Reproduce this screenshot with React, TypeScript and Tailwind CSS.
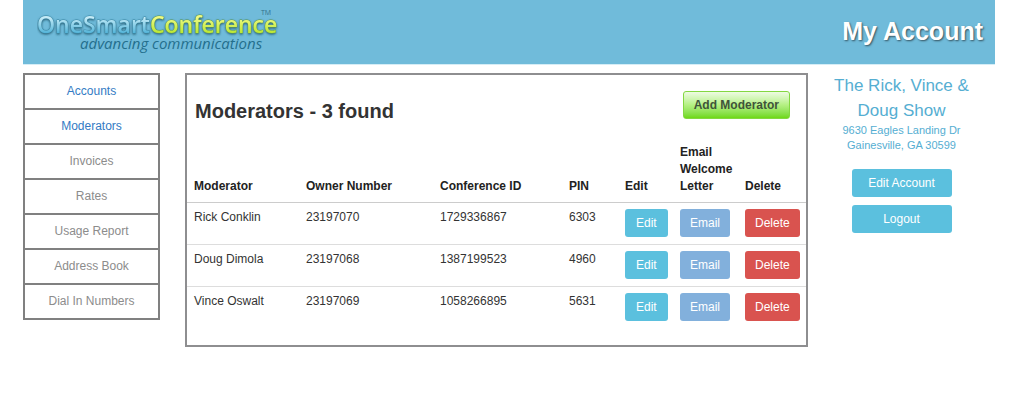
interface Moderator {
  name: string;
  owner: string;
  conference: string;
  pin: string;
}

const navItems = [
  { label: 'Accounts', active: true },
  { label: 'Moderators', active: true },
  { label: 'Invoices', active: false },
  { label: 'Rates', active: false },
  { label: 'Usage Report', active: false },
  { label: 'Address Book', active: false },
  { label: 'Dial In Numbers', active: false },
];

const moderators: Moderator[] = [
  { name: 'Rick Conklin', owner: '23197070', conference: '1729336867', pin: '6303' },
  { name: 'Doug Dimola', owner: '23197068', conference: '1387199523', pin: '4960' },
  { name: 'Vince Oswalt', owner: '23197069', conference: '1058266895', pin: '5631' },
];

function Logo() {
  return (
    <svg width="250" height="56" viewBox="0 0 250 56" role="img" aria-label="OneSmartConference">
      <defs>
        <linearGradient id="logo-blue" x1="0" y1="0" x2="0" y2="1">
          <stop offset="0.3" stopColor="#c4ebf7" />
          <stop offset="0.8" stopColor="#4fb2d8" />
        </linearGradient>
        <linearGradient id="logo-green" x1="0" y1="0" x2="0" y2="1">
          <stop offset="0.3" stopColor="#effa84" />
          <stop offset="0.8" stopColor="#b8e62e" />
        </linearGradient>
        <filter id="logo-shadow" x="-5%" y="-10%" width="110%" height="130%">
          <feDropShadow dx="0" dy="1" stdDeviation="0.8" floodColor="#1c5268" floodOpacity="0.9" />
        </filter>
      </defs>
      <g
        className="font-['Open_Sans',sans-serif] text-[23px] font-semibold"
        filter="url(#logo-shadow)"
        strokeWidth="0.8"
        paintOrder="stroke"
        strokeLinejoin="round"
      >
        <text x="0" y="29">
          <tspan fill="url(#logo-blue)" stroke="#3b8aa8">OneSmart</tspan>
          <tspan fill="url(#logo-green)" stroke="#5c9a4c">Conference</tspan>
        </text>
      </g>
      <text x="224" y="11" fill="#33718a" className="font-['Open_Sans',sans-serif] text-[7px]">TM</text>
      <text x="43" y="45" fill="#246f8d" className="font-['Open_Sans',sans-serif] text-[15px] italic">
        advancing communications
      </text>
    </svg>
  );
}

function Header() {
  return (
    <header className="flex h-[65px] items-center justify-between border-b border-[#d5edf6] bg-[#70bbda] pr-3 pl-3.5">
      <a href="#home" className="block">
        <Logo />
      </a>
      <h1 className="text-[25px] font-bold text-white [text-shadow:1px_1px_2px_#33515e]">My Account</h1>
    </header>
  );
}

function SideNav() {
  return (
    <nav className="col-span-2 pr-[25px]">
      <ul className="divide-y-2 divide-[#808080] border-2 border-[#808080] text-center text-[12px]">
        {navItems.map((item) => (
          <li key={item.label}>
            <a
              href="#nav"
              className={item.active ? 'block py-2 leading-[17px] text-[#337bc4]' : 'block py-2 leading-[17px] text-[#8c8c8c]'}
            >
              {item.label}
            </a>
          </li>
        ))}
      </ul>
    </nav>
  );
}

function ModeratorTable() {
  return (
    <table className="w-full table-fixed text-left text-[12px] leading-[17px] text-[#333]">
      <colgroup>
        <col className="w-[112px]" />
        <col className="w-[134px]" />
        <col className="w-[129px]" />
        <col className="w-[56px]" />
        <col className="w-[55px]" />
        <col className="w-[65px]" />
        <col className="w-[68px]" />
      </colgroup>
      <thead>
        <tr className="border-b border-[#ccc] align-bottom text-[#222]">
          <th className="px-[7px] pb-[7px]">Moderator</th>
          <th className="px-[7px] pb-[7px]">Owner Number</th>
          <th className="px-[7px] pb-[7px]">Conference ID</th>
          <th className="px-[7px] pb-[7px]">PIN</th>
          <th className="px-[7px] pb-[7px]">Edit</th>
          <th className="px-[7px] pb-[7px]">Email Welcome Letter</th>
          <th className="px-[7px] pb-[7px]">Delete</th>
        </tr>
      </thead>
      <tbody className="divide-y divide-[#ddd]">
        {moderators.map((m) => (
          <tr key={m.owner} className="align-top">
            <td className="px-[7px] py-1.5">{m.name}</td>
            <td className="px-[7px] py-1.5">{m.owner}</td>
            <td className="px-[7px] py-1.5">{m.conference}</td>
            <td className="px-[7px] py-1.5">{m.pin}</td>
            <td className="pt-1.5 pb-[7px] pl-[7px]">
              <button className="block h-7 rounded-[3px] bg-[#5bc0de] px-[11px] text-white">Edit</button>
            </td>
            <td className="pt-1.5 pb-[7px] pl-[7px]">
              <button className="block h-7 rounded-[3px] bg-[#82b0dc] px-2.5 text-white">Email</button>
            </td>
            <td className="pt-1.5 pb-[7px] pl-[7px]">
              <button className="block h-7 rounded-[3px] bg-[#d9534f] px-2.5 text-white">Delete</button>
            </td>
          </tr>
        ))}
      </tbody>
    </table>
  );
}

function Moderators() {
  return (
    <main className="col-span-8 pr-[25px]">
      <section className="border-2 border-[#8e8e90] pb-[17px]">
        <div className="flex items-start justify-between pt-4 pr-4 pl-2">
          <h2 className="pt-1.5 text-[20px] leading-7 font-bold text-[#333]">Moderators - 3 found</h2>
          <button className="h-7 rounded-[3px] border border-[#83d841] bg-linear-to-b from-[#eefbe2] via-[#b4f082] to-[#6fd80f] px-2.5 text-[12px] font-bold text-[#40543a]">
            Add Moderator
          </button>
        </div>
        <div className="pt-[19px]">
          <ModeratorTable />
        </div>
      </section>
    </main>
  );
}

function AccountPanel() {
  return (
    <aside className="col-span-2 pr-[25px] text-center text-[#55aed2]">
      <h3 className="text-[17px] leading-[25px]">The Rick, Vince &amp; Doug Show</h3>
      <p className="text-[11px] leading-[15px]">
        9630 Eagles Landing Dr
        <br />
        Gainesville, GA 30599
      </p>
      <div className="mx-auto flex w-[100px] flex-col gap-2 pt-4 text-[12px] text-white">
        <button className="h-7 rounded-[3px] bg-[#5bc0de]">Edit Account</button>
        <button className="h-7 rounded-[3px] bg-[#5bc0de]">Logout</button>
      </div>
    </aside>
  );
}

export default function App() {
  return (
    <div className="min-h-screen bg-white pr-[29px] pl-[23px] font-['Liberation_Sans',Arial,sans-serif]">
      <Header />
      <div className="grid grid-cols-12 items-start pt-2">
        <SideNav />
        <Moderators />
        <AccountPanel />
      </div>
    </div>
  );
}
